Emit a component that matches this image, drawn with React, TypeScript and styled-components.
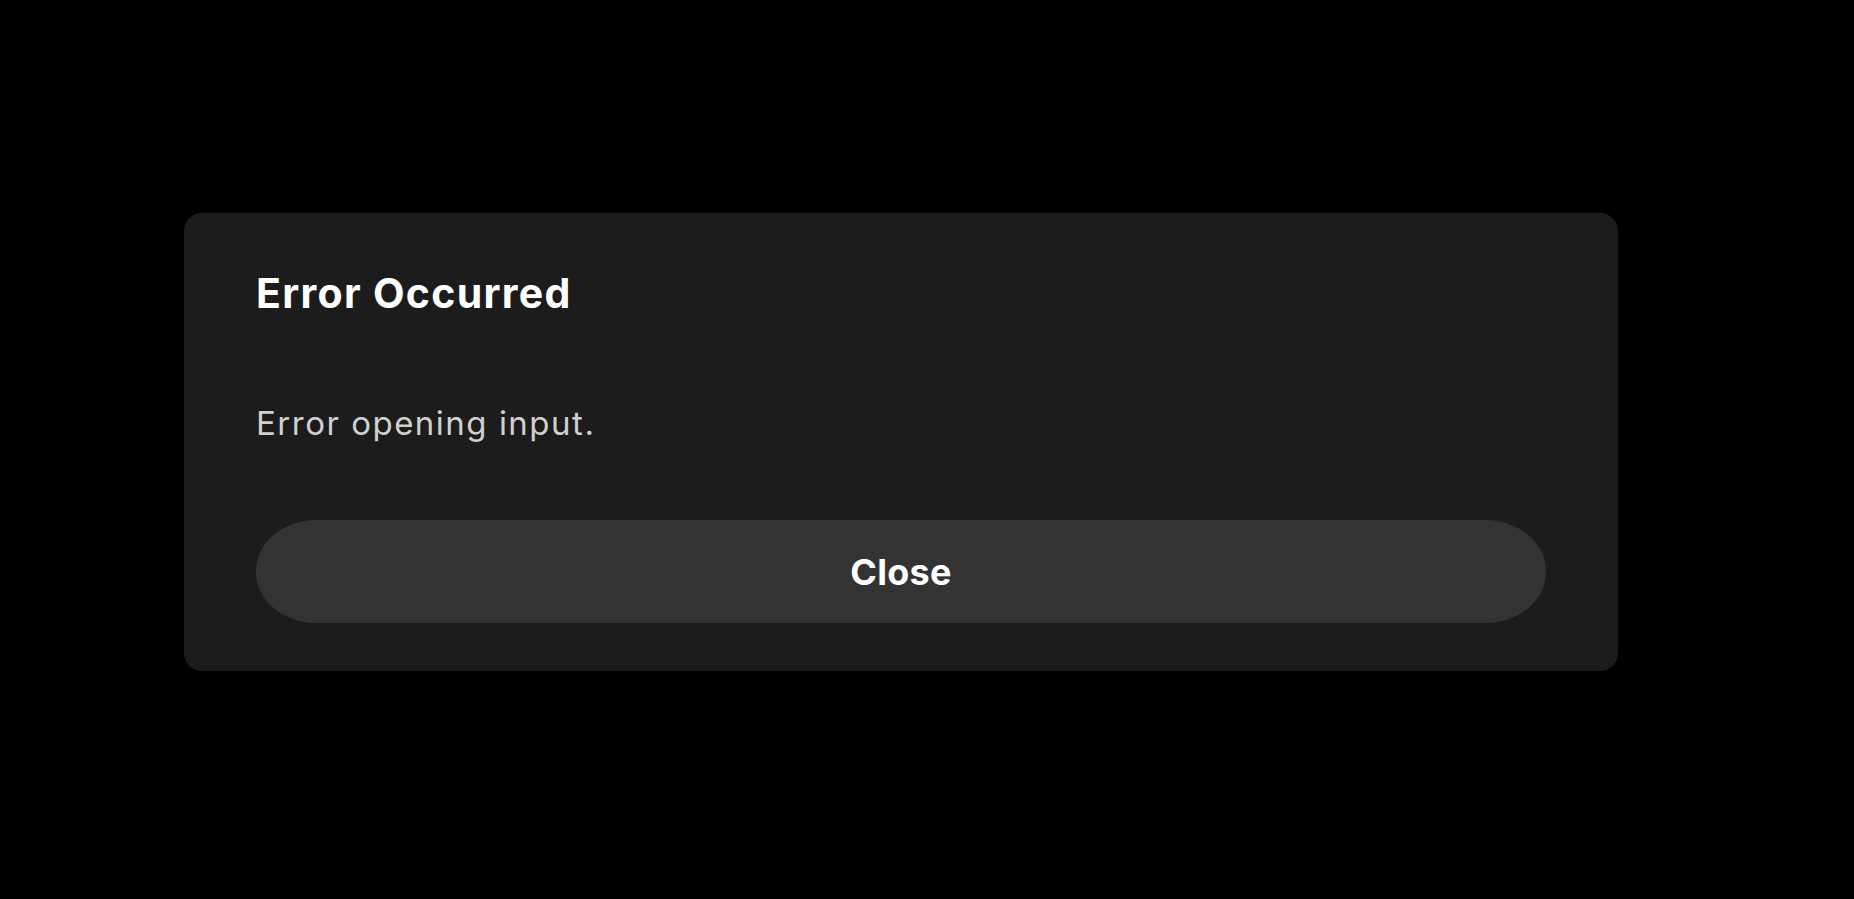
import React from 'react';
import styled, {createGlobalStyle} from "styled-components";

const GlobalStyle = createGlobalStyle`
    html, body {
        margin: 0;
        padding: 0;
        background: #000;
        height: 100%;
    }
    body {
        font-family: Inter, "Liberation Sans", sans-serif;
        -webkit-font-smoothing: antialiased;
    }
`;

export default function App() {
    return (
        <>
            <GlobalStyle/>
            <Page>
                <Dialog role={"dialog"}>
                    <Title>Error Occurred</Title>
                    <Message>Error opening input.</Message>
                    <CloseButton>Close</CloseButton>
                </Dialog>
            </Page>
        </>
    );
}

const Page = styled.main`
    min-height: 899px;
    padding: 213px 0 0 184px;
    box-sizing: border-box;
`;

const Dialog = styled.section`
    width: 1434px;
    height: 458px;
    box-sizing: border-box;
    padding: 55px 72px 48px;
    background: #1c1c1c;
    border-radius: 18px;
    display: flex;
    flex-direction: column;
`;

const Title = styled.h2`
    margin: 0;
    font-size: 41px;
    line-height: 50px;
    font-weight: 700;
    letter-spacing: 1.3px;
    color: #fff;
`;

const Message = styled.p`
    margin: 85px 0 0;
    font-size: 33px;
    line-height: 40px;
    font-weight: 400;
    letter-spacing: 1.5px;
    color: #d0d0d0;
`;

const CloseButton = styled.button`
    margin-top: auto;
    height: 103px;
    width: 100%;
    border: none;
    border-radius: 60px / 51px;
    background: #333;
    color: #fff;
    font-family: inherit;
    font-size: 36px;
    font-weight: 700;
    letter-spacing: 0.3px;
    cursor: pointer;
`;
